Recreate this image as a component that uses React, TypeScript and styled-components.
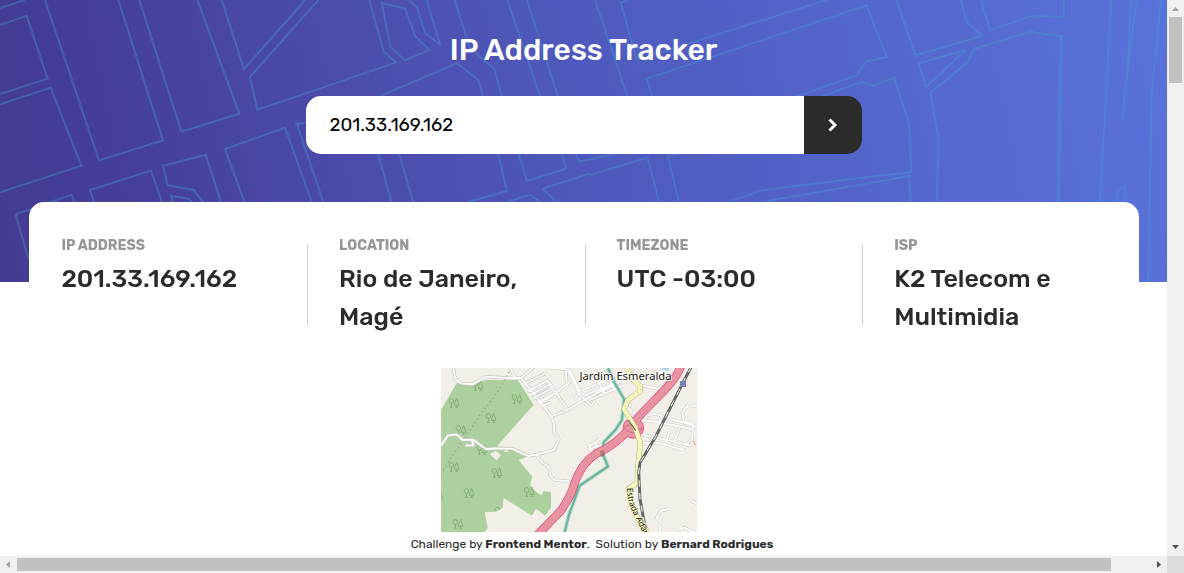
import React from 'react';
import styled, { createGlobalStyle } from 'styled-components';

const GlobalStyle = createGlobalStyle`
  * { box-sizing: border-box; }
  body { margin: 0; overflow: hidden; font-family: Rubik, Roboto, sans-serif; color: #2b2b2b; background: #fff; }
  h1, p, h2 { margin: 0; }
`;

const Frame = styled.div`
  display: grid;
  grid-template: 556px 17px / 1167px 17px;
  width: 1184px;
  height: 573px;
`;
const Page = styled.main`
  overflow: hidden;
  background: #fff;
`;
const Header = styled.header`
  position: relative;
  height: 282px;
  display: flex;
  flex-direction: column;
  align-items: center;
  padding: 32px 0 0 1px;
  background: linear-gradient(78deg, #443b94 0%, #463e99 12%, #4b4bab 30%, #4f5abe 52%, #5468cd 78%, #5973dc 100%);
`;
const Streets = styled.svg`
  position: absolute;
  inset: 0;
  fill: none;
  stroke: #45a0d0;
  stroke-opacity: 0.37;
`;
const Title = styled.h1`
  position: relative;
  margin-right: 1px;
  font-size: 30px;
  line-height: 36px;
  font-weight: 500;
  color: #fff;
  white-space: nowrap;
`;
const Search = styled.form`
  position: relative;
  display: flex;
  width: 556px;
  height: 58px;
  margin-top: 28px;
  border-radius: 15px;
  overflow: hidden;
`;
const Input = styled.input`
  flex: 1;
  min-width: 0;
  border: 0;
  outline: 0;
  padding: 0 23.5px;
  background: #fff;
  color: #000;
  font: 400 18.6px Rubik, Roboto, sans-serif;
`;
const Submit = styled.button`
  width: 58px;
  border: 0;
  padding: 0 2px 0 0;
  background: #2b2b2b;
  display: flex;
  align-items: center;
  justify-content: center;
`;
const Card = styled.section`
  position: relative;
  display: grid;
  grid-template-columns: repeat(4, 277.6px);
  width: 1110px;
  height: 166px;
  margin: -80px 0 0 29px;
  padding-left: 0.4px;
  border-radius: 15px;
  background: #fff;
  will-change: transform;
`;
const Column = styled.div<{ $divided: boolean }>`
  display: flex;
  &::before {
    content: '';
    width: 1px;
    height: 80px;
    margin-top: 43px;
    background: ${(p) => (p.$divided ? '#ccc' : 'transparent')};
  }
`;
const Detail = styled.div`
  padding: 34px 0 0 31px;
`;
const Label = styled.h2`
  font-size: 14px;
  line-height: 20px;
  font-weight: 700;
  color: #969696;
`;
const Value = styled.p`
  margin-top: 4px;
  font-size: 25px;
  line-height: 38px;
  font-weight: 500;
  white-space: nowrap;
`;
const Tile = styled.svg`
  display: block;
  width: 256px;
  height: 164px;
  margin-left: 441px;
  fill: none;
`;
const Footer = styled.footer`
  width: 1184px;
  padding-top: 4px;
  font-size: 12px;
  line-height: 16px;
  text-align: center;
  white-space: pre;
`;
const Bar = styled.div<{ $vertical?: boolean }>`
  display: flex;
  flex-direction: ${(p) => (p.$vertical ? 'column' : 'row')};
  justify-content: space-between;
  background: #f0f0f0;
`;
const Thumb = styled.div<{ $vertical?: boolean }>`
  background: #c1c1c1;
  width: ${(p) => (p.$vertical ? 13 : 1094)}px;
  height: ${(p) => (p.$vertical ? 66 : 13)}px;
  margin: ${(p) => (p.$vertical ? '0 auto auto 2px' : '2px auto 0 0')};
`;
const Arrow = styled.svg`
  display: block;
  width: 17px;
  height: 17px;
  flex: none;
`;
const Corner = styled.div`
  background: #dcdcdc;
`;

const details = [
  { label: 'IP ADDRESS', lines: ['201.33.169.162'] },
  { label: 'LOCATION', lines: ['Rio de Janeiro,', 'Magé'] },
  { label: 'TIMEZONE', lines: ['UTC -03:00'] },
  { label: 'ISP', lines: ['K2 Telecom e', 'Multimidia'] },
];

const StreetMap = () => (
  <Streets width="1167" height="282" viewBox="0 0 1167 282">
    <g transform="scale(.33333)" strokeWidth="6">
      <path d="M0 24 75 0M0 75 80 47 143 236 0 282M0 313 152 263 244 497 0 577M135 0 297 481 489 421 355 0M418 0 544 395 718 341 592 0M665 0 732 207 900 18M900 62 750 231 772 329 900 286M85 775 47 643 215 584 230 630M290 630 270 570 453 512 494 630M610 606 580 570 503 556 489 497 617 464 664 610M520 610 513 587 565 596 580 610M735 610 675 447 855 383 870 425" />
    </g>
    <g transform="translate(290 0) scale(.33333)" strokeWidth="5.5">
      <path d="M30 18 44 0M30 62 86 0M238 0 281 154 318 187 30 286M275 9 345 25 376 109 418 150 345 181 301 139ZM355 0 381 22 405 99 451 135 410 0M494 0 540 145 613 207 660 380M275 286 501 190 565 240 610 400 651 573 535 606M14 371 30 368M0 425 65 606M100 606 22 375 75 355M262 455 305 606M325 455 370 606M652 0 750 288M711 0 803 288M685 460 711 543 828 506 815 460M858 460 866 485 900 477M652 606 720 584 752 606M900 521 758 566 799 606" />
    </g>
    <g transform="translate(590 0) scale(.33333)" strokeWidth="5.5">
      <path d="M15 0 112 290M140 180 92 7 118 0M140 180 710 0M186 290 171 236 830 16 890 171 828 185 801 226 618 290M690 290 815 246 848 258 882 244M0 479 80 460M0 525 173 473 207 606M267 606 233 467 275 460M415 606 520 570 882 525M530 603 882 542" />
    </g>
    <g transform="translate(884 0) scale(.33333)" strokeWidth="6">
      <path d="M37 0 94 166 294 108 250 68 230 0M291 0 319 91 442 48 540 51 540 0M0 245 31 233 75 370 82 516 0 526M0 542 75 527 80 610M158 610 164 418 139 278 251 187 268 148 440 95 528 109M104 190 245 150 127 260ZM682 0 648 610M742 0 729 240M758 0 729 225 715 363M831 0 803 280 793 850M699 610 699 578 722 555 722 610" />
      <path d="M532 107 526 400 523 610" strokeWidth="10" />
    </g>
  </Streets>
);

const trees = [[54, 117], [126, 66], [243, 105], [165, 162], [75, 198], [138, 258], [54, 309], [183, 327], [99, 387], [280, 384], [66, 480]];

const hillRoads =
  'M52 12 58 45 75 58 110 61 150 38 200 41 255 42 295 8M222 10 236 40M255 42 310 110 346 158 354 180 354 205 369 227 354 258 300 272 277 276 245 262 230 254 180 253 150 255 111 227 80 228 62 211 35 215 15 245M108 230 112 244 89 244M301 272 320 297 340 309 342 335 356 348 402 352M346 158 402 135M312 120 402 55M264 60 325 30M275 83 335 50 394 135M282 94 345 60M289 105 355 69M302 116 374 78M319 126 345 115M345 12 402 17M390 17 392 65';
const townRoads =
  'M0 136 55 105 85 88 160 52M0 20 38 95 70 125 80 110M40 80 145 35M50 94 155 52M65 108 165 65M80 30 110 90M105 20 140 75M20 110 35 82 5 16M180 50 210 12M225 65 270 75 298 55M65 247 95 225M58 257 115 238M65 267 108 247M62 240 72 267M80 233 90 259M182 120 195 130 200 155M225 155 265 150 305 165 390 188M216 168 270 174 370 195M210 235 280 238 345 258M220 212 290 226 370 245M240 150 220 180M282 155 270 184M260 205 250 235M303 206 289 246M335 192 318 235M362 120 343 146 347 172 375 180 373 222 345 255M350 130 385 125M302 435 280 440 266 460 278 475 275 505M312 503 350 491 378 505M335 486 343 503M370 410 388 420';
const motorway = 'M338 8C320 65 215 143 192 185C165 218 130 250 85 269C45 295 30 330 20 356C10 395 0 405 -21 440L-86 507-100 521';
const yellowRoad = 'M177 12 192 45 217 66 216 82 181 107 168 135 201 190 217 236 209 315 208 355 182 374 188 410 207 458 239 505';
const railway = 'M370 8 342 62 262 220 216 296 212 325 216 405 234 505';
const boundary = 'M120 12 140 57 168 105 162 168 142 198 107 235 103 268 120 307 35 365 2 455-10 505';

const MapTile = () => (
  <Tile viewBox="0 0 256 164">
    <rect width="256" height="164" fill="#f2efe9" />
    <g transform="translate(-5 -4) scale(.33333)" strokeLinejoin="round">
      <path fill="#add19e" d="M0 165 62 57 95 62 150 48 245 48 293 122 183 247 245 255 280 275 248 288 289 338 282 362 300 383 316 393 323 381 345 385V431L327 455 300 434 288 455 203 402 200 431 180 443 146 445 155 492 140 510H0Z" />
      <path fill="#f2efe9" d="m162 271 16-11 17 13-13 16ZM202 263l8-9 10 10Z" />
      <g stroke="#86ae78" strokeWidth="3">
        {trees.map(([x, y]) => (
          <g key={`${x}-${y}`} transform={`translate(${x} ${y})`}>
            <circle cx="-8" cy="-6" r="7" />
            <path d="M-8 1V13M-12 13H-4M8-14 0 7H15ZM8 7V13M4 13H12" />
          </g>
        ))}
        <path d="M178 440A7 7 0 1 1 191 438M14 389 20 402H14" />
      </g>
      <path d="M15 378Q80 380 105 347 132 335 134 304" stroke="#b3d5a5" strokeWidth="2" />
      <path d="M226 12 200 60 166 110 127 160 85 225 50 275 15 328" stroke="#9e8f9b" strokeWidth="3.5" strokeDasharray="4 9" />
      <path d={hillRoads} stroke="#c8c4c0" strokeWidth="9.5" />
      <path d={hillRoads} stroke="#fff" strokeWidth="5.5" />
    </g>
    <g transform="translate(127 -4) scale(.33333)" strokeLinejoin="round">
      <path d={townRoads} stroke="#cdc9c5" strokeWidth="9" />
      <path d={townRoads} stroke="#fff" strokeWidth="5.5" />
      <path d={boundary} stroke="#9ad3bf" strokeWidth="12" opacity=".7" />
      <path d={boundary} stroke="#6bb39f" strokeWidth="6" />
      <path stroke="#dc2a67" strokeWidth="25" d={motorway} />
      <circle cx="196" cy="192" r="31" fill="#e892a2" stroke="#dc2a67" strokeWidth="2" />
      <path stroke="#e892a2" strokeWidth="22" d={motorway} />
      <path stroke="#b65b78" strokeWidth="2.5" strokeDasharray="2 13" d="M329 40C300 90 230 140 192 185" />
      <path stroke="#d4597d" strokeWidth="2" d="M170 190q12-14 27 0t25 0q0 20-27 16t-25-16" />
      <path stroke="#b5b07e" strokeWidth="16" d={yellowRoad} />
      <path stroke="#f7fabf" strokeWidth="13" d={yellowRoad} />
      <path stroke="#e0a58f" strokeWidth="3" strokeDasharray="3 11" d="M181 20 192 45 217 66 216 82 181 107 168 135 180 155" />
      <path stroke="#666" strokeWidth="9" d={railway} />
      <path stroke="#fff" strokeWidth="3" strokeDasharray="19 19" d={railway} />
      <path d="M96 262 108 258 111 274 99 279Z" fill="#876854" opacity=".6" />
      <path d="m181 168 22 32" stroke="#67594b" strokeWidth="3.5" />
      <path fill="#7b83b5" d="M336 51H354V69H336Z" />
      <path fill="#aad3df" d="m284 10 20 0-4 11-17-3Z" />
      <path d="m376 231 7 13" stroke="#d99a5c" strokeWidth="3" />
    </g>
    <text x="138.5" y="12" textLength="92" lengthAdjust="spacingAndGlyphs" fontFamily="Noto Sans" fontSize="11" fill="#222" stroke="#fff" strokeWidth="2" strokeOpacity=".7" paintOrder="stroke">Jardim Esmeralda</text>
    <path id="estrada" d="M186 120Q186 134 193 147T209 182" />
    <text fontFamily="Noto Sans" fontSize="8.4" fill="#111" stroke="#f7fabf" strokeWidth="1.5" paintOrder="stroke"><textPath href="#estrada">Estrada Adam</textPath></text>
  </Tile>
);

export default function App() {
  return (
    <>
      <GlobalStyle />
      <Frame>
        <Page>
          <Header>
            <StreetMap />
            <Title>IP Address Tracker</Title>
            <Search onSubmit={(e) => e.preventDefault()}>
              <Input defaultValue="201.33.169.162" aria-label="IP address" />
              <Submit aria-label="Search">
                <svg width="11" height="14" viewBox="0 0 11 14"><path d="m2.5 1.5 5.5 5.5-5.5 5.5" fill="none" stroke="#fff" strokeWidth="3" /></svg>
              </Submit>
            </Search>
          </Header>
          <Card>
            {details.map((d, i) => (
              <Column key={d.label} $divided={i > 0}>
                <Detail>
                  <Label>{d.label}</Label>
                  <Value>{d.lines.map((line) => <React.Fragment key={line}>{line}<br /></React.Fragment>)}</Value>
                </Detail>
              </Column>
            ))}
          </Card>
          <MapTile />
          <Footer>Challenge by <b>Frontend Mentor</b>.  Solution by <b>Bernard Rodrigues</b></Footer>
        </Page>
        <Bar $vertical>
          <Arrow><path d="M5 11h7L8.5 7Z" fill="#a3a3a3" /></Arrow>
          <Thumb $vertical />
          <Arrow><path d="M5 6h7L8.5 10Z" fill="#505050" /></Arrow>
        </Bar>
        <Bar>
          <Arrow><path d="M10 5v7L6 8.5Z" fill="#a3a3a3" /></Arrow>
          <Thumb />
          <Arrow><path d="M7 5v7l4-3.5Z" fill="#505050" /></Arrow>
        </Bar>
        <Corner />
      </Frame>
    </>
  );
}
